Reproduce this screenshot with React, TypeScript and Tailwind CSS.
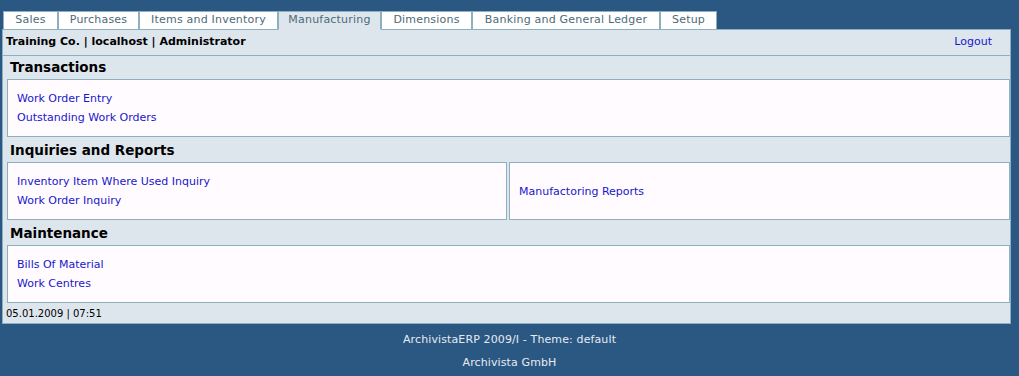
import React from "react";

const tabs: { t: string; w: string }[] = [
  { t: "Sales", w: "w-[55px]" },
  { t: "Purchases", w: "w-[81px]" },
  { t: "Items and Inventory", w: "w-[139px]" },
  { t: "Manufacturing", w: "w-[103px]" },
  { t: "Dimensions", w: "w-[91px]" },
  { t: "Banking and General Ledger", w: "w-[188px]" },
  { t: "Setup", w: "w-[57px]" },
];

function Box({ links, className = "" }: { links: string[]; className?: string }) {
  return (
    <div
      className={`border border-[#8cb0c0] bg-[#fffbff] h-[58px] pl-[9px] flex flex-col justify-center ${className}`}
    >
      {links.map((l) => (
        <a key={l} href="#" className="block text-[11px] leading-[19px] text-[#1717cc] no-underline">
          {l}
        </a>
      ))}
    </div>
  );
}

function Heading({ children, h }: { children: React.ReactNode; h: string }) {
  return (
    <div className={`${h} flex items-center pl-[3px] text-[13.5px] font-bold text-black`}>{children}</div>
  );
}

export default function App() {
  return (
    <div
      className="w-[1019px] h-[376px] bg-[#2b5883] overflow-hidden"
      style={{ fontFamily: '"DejaVu Sans", Verdana, sans-serif' }}
    >
      <div className="pt-[11px]">
        <div className="flex ml-[3px] relative z-10 -mb-px">
          {tabs.map(({ t, w }) => {
            const active = t === "Manufacturing";
            return (
              <div
                key={t}
                className={`${w} h-[19px] flex items-center justify-center text-[11px] tracking-[0.2px] text-[#4c6b7b] border border-[#8cb0c0] ${
                  active ? "bg-[#dee6ed] border-b-[#dee6ed]" : "bg-white"
                }`}
              >
                {t}
              </div>
            );
          })}
        </div>
        <div className="ml-[2px] w-[1009px] border border-[#8cb0c0] bg-[#dee6ed]">
          <div className="h-[26px] border-b border-[#8cb0c0] flex items-center justify-between pl-[3px] pr-[18px]">
            <span className="text-[11px] font-bold text-black">Training Co. | localhost | Administrator</span>
            <a href="#" className="text-[11px] text-[#1717cc] no-underline">
              Logout
            </a>
          </div>
          <div className="pl-[4px] pr-0">
            <Heading h="h-[23px]">Transactions</Heading>
            <Box links={["Work Order Entry", "Outstanding Work Orders"]} />
            <Heading h="h-[25px] pt-[1px]">Inquiries and Reports</Heading>
            <div className="flex gap-[2px]">
              <Box className="w-[500px]" links={["Inventory Item Where Used Inquiry", "Work Order Inquiry"]} />
              <Box className="flex-1" links={["Manufactoring Reports"]} />
            </div>
            <Heading h="h-[25px] pt-[1px]">Maintenance</Heading>
            <Box links={["Bills Of Material", "Work Centres"]} />
          </div>
          <div className="h-[20px] flex items-center pl-[3px] text-[10px] text-black">05.01.2009 | 07:51</div>
        </div>
        <div className="pt-[4px] text-center text-[11px] leading-[23px] tracking-[0.12px] text-[#e6ebf2]">
          <div>ArchivistaERP 2009/I - Theme: default</div>
          <div>Archivista GmbH</div>
        </div>
      </div>
    </div>
  );
}
